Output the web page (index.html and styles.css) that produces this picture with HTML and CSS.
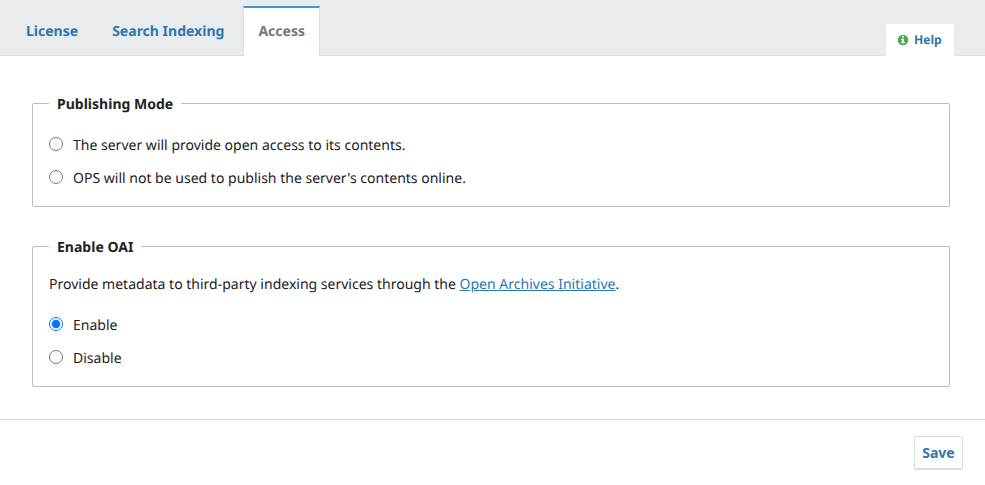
FILE: index.html
```html
<!DOCTYPE html>
<html lang="en">
<head>
<meta charset="utf-8">
<title>Access</title>
<link rel="stylesheet" href="styles.css">
</head>
<body>
<nav class="tabs">
  <a class="tab">License</a>
  <a class="tab">Search Indexing</a>
  <a class="tab tab-active">Access</a>
  <a class="help"><svg class="help-icon" viewBox="0 0 12 12"><circle cx="6" cy="6" r="5.3" fill="#4bab50"/><path d="M5 2h2v1.5H5zM4.3 4.7H7v3.4h.8v1.2H4.2V8.1H5V5.9h-.7z" fill="#fff"/></svg>Help</a>
</nav>
<form class="form">
  <fieldset class="group group-mode">
    <legend>Publishing Mode</legend>
    <label class="option"><input type="radio" name="mode"><span>The server will provide open access to its contents.</span></label>
    <label class="option"><input type="radio" name="mode"><span>OPS will not be used to publish the server's contents online.</span></label>
  </fieldset>
  <fieldset class="group group-oai">
    <legend>Enable OAI</legend>
    <p>Provide metadata to third-party indexing services through the <a class="link">Open Archives Initiative</a>.</p>
    <label class="option"><input type="radio" name="oai" checked><span>Enable</span></label>
    <label class="option"><input type="radio" name="oai"><span>Disable</span></label>
  </fieldset>
</form>
<footer class="footer"><button class="save" type="button">Save</button></footer>
</body>
</html>
```
FILE: styles.css
```css
* { box-sizing: border-box; }
body {
  margin: 0;
  height: 485px;
  overflow: hidden;
  background: #fff;
  color: #222;
  font: 14.02px/20px "Noto Sans", sans-serif;
  text-rendering: geometricPrecision;
}
.tabs {
  display: flex;
  align-items: flex-end;
  height: 56px;
  padding: 0 31px 0 11px;
  background: #eaebed;
  border-bottom: 1px solid #ddd;
}
.tab {
  height: 50px;
  padding: 17px 15px 0;
  margin-right: 4px;
  color: #2a78b0;
  font-weight: 700;
}
.tab-active {
  margin-bottom: -1px;
  padding: 14px 14px 0;
  color: #777;
  background: #fff;
  border: 1px solid #ddd;
  border-top: 2px solid #3b9bdc;
  border-bottom: 0;
}
.help {
  display: flex;
  align-items: center;
  width: 68px;
  height: 32px;
  margin: 0 0 -1px auto;
  padding: 0 0 0 11px;
  border-radius: 2px 2px 0 0;
  background: #fff;
  color: #2a78b0;
  font-size: 12.1px;
  font-weight: 700;
}
.help-icon { width: 12px; height: 12px; margin-right: 5px; }
.form { height: 364px; padding: 38px 35px 0 32px; border-bottom: 1px solid #ddd; }
.group {
  display: block;
  margin: 0 0 30px;
  padding: 0 16px;
  border: 1px solid #bbb;
  border-radius: 2px;
}
.group-mode { height: 113px; }
.group-oai { height: 150px; }
legend { height: 19px; padding: 0 8px; font-weight: 700; line-height: 22px; }
.group p { margin: 19px 0 21px; }
.option { display: flex; align-items: center; height: 20px; margin-bottom: 13px; }
.group-mode legend + .option { margin-top: 23px; }
.option input { width: 14px; height: 14px; margin: 0 10px 4px 0; }
.link { color: #2a78b0; text-decoration: underline; }
.footer { display: flex; justify-content: flex-end; padding: 16px 22px; }
.save {
  width: 49px;
  height: 33px;
  padding: 0;
  background: #fff;
  border: 1px solid #ddd;
  border-radius: 2px;
  box-shadow: 0 1px 0 #ddd;
  color: #2a78b0;
  font: 700 14px/20px "Noto Sans", sans-serif;
}
```
